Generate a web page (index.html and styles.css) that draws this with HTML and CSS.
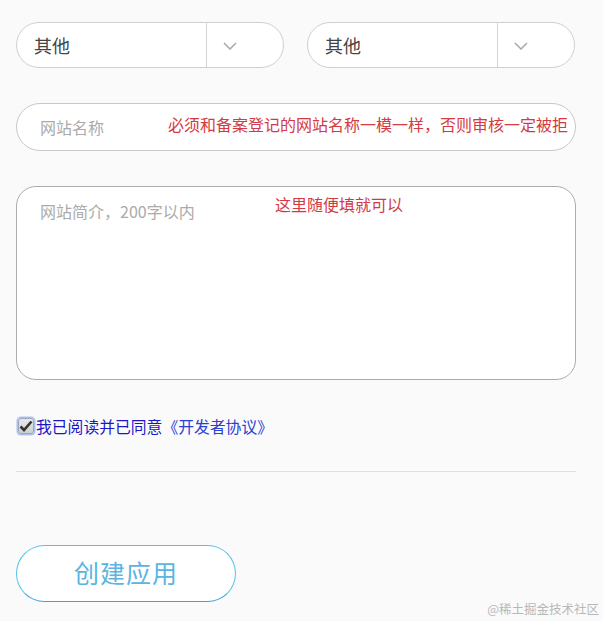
FILE: index.html
```html
<!DOCTYPE html>
<html lang="zh">
<head>
<meta charset="utf-8">
<link rel="stylesheet" href="styles.css">
</head>
<body>
<div class="page">
  <div class="selects">
    <div class="select">
      <span class="select-text">其他</span>
      <span class="select-arrow"><svg width="14" height="8" viewBox="0 0 14 8"><path d="M1 1 L7 7 L13 1" fill="none" stroke="#a8a8a8" stroke-width="1.5"/></svg></span>
    </div>
    <div class="select">
      <span class="select-text">其他</span>
      <span class="select-arrow"><svg width="14" height="8" viewBox="0 0 14 8"><path d="M1 1 L7 7 L13 1" fill="none" stroke="#a8a8a8" stroke-width="1.5"/></svg></span>
    </div>
  </div>
  <div class="input">
    <span class="placeholder">网站名称</span>
    <span class="note note-name">必须和备案登记的网站名称一模一样，否则审核一定被拒</span>
  </div>
  <div class="textarea">
    <span class="placeholder">网站简介，200字以内</span>
    <span class="note note-desc">这里随便填就可以</span>
  </div>
  <label class="agree">
    <span class="checkbox"><svg width="14" height="12" viewBox="0 0 14 12"><path d="M1.5 6.5 L5 10 L12.5 1.5" fill="none" stroke="#333" stroke-width="2.6"/></svg></span>
    <span class="agree-text">我已阅读并已同意<span class="link">《开发者协议》</span></span>
  </label>
  <div class="divider"></div>
  <div class="btn">创建应用</div>
</div>
<div class="watermark">@稀土掘金技术社区</div>
</body>
</html>
```
FILE: styles.css
```css
html, body {
  margin: 0;
  padding: 0;
  background: #fafafa;
  font-family: "Noto Sans CJK SC", "Noto Sans", sans-serif;
}
.page {
  width: 560px;
  padding: 22px 0 0 16px;
  display: flex;
  flex-direction: column;
}
.selects {
  display: flex;
  gap: 23px;
}
.select {
  width: 268px;
  height: 46px;
  box-sizing: border-box;
  border: 1px solid #cfcfcf;
  border-radius: 23px;
  background: #fff;
  display: flex;
  align-items: center;
}
.select-text {
  flex: 1;
  padding-left: 17px;
  font-size: 18px;
  color: #444;
  line-height: 44px;
  border-right: 1px solid #d4d4d4;
  margin-top: -1px;
}
.select-arrow {
  width: 46px;
  display: flex;
  justify-content: center;
  padding-right: 30px;
  padding-top: 1px;
}
.input {
  margin-top: 35px;
  height: 48px;
  box-sizing: border-box;
  border: 1px solid #c8c8c8;
  border-radius: 24px;
  background: #fff;
  display: flex;
  align-items: center;
  padding-left: 23px;
  position: relative;
}
.placeholder {
  font-size: 16px;
  color: #ababab;
}
.note {
  position: absolute;
  font-size: 16px;
  color: #d43a44;
  white-space: nowrap;
}
.note-name {
  left: 151px;
  top: 8px;
}
.textarea {
  margin-top: 35px;
  height: 194px;
  box-sizing: border-box;
  border: 1px solid #acacac;
  border-radius: 20px;
  background: #fff;
  padding: 12px 0 0 23px;
  position: relative;
}
.textarea .placeholder {
  line-height: 24px;
}
.note-desc {
  left: 258px;
  top: 5px;
}
.agree {
  margin-top: 36px;
  display: flex;
  align-items: center;
  height: 20px;
}
.checkbox {
  width: 16px;
  height: 16px;
  box-sizing: border-box;
  border: 1px solid #9aa5c8;
  border-radius: 3px;
  background: linear-gradient(#e8e8e8, #cfcfcf);
  box-shadow: 0 0 0 1.5px #a9c1f0;
  display: flex;
  align-items: center;
  justify-content: center;
  margin-left: 2px;
}
.agree-text {
  font-size: 15.8px;
  color: #1b17c9;
  margin-left: 2px;
}
.link {
  color: #2a40d2;
}
.divider {
  margin-top: 35px;
  height: 1px;
  background: #dedede;
}
.btn {
  margin-top: 73px;
  width: 220px;
  height: 57px;
  box-sizing: border-box;
  border: 1.5px solid #54c3ea;
  border-bottom-color: #3aa2e6;
  border-radius: 29px;
  background: #fff;
  display: flex;
  align-items: center;
  justify-content: center;
  font-size: 25px;
  color: #5ab5e2;
  letter-spacing: 1px;
  padding-bottom: 3px;
}
.watermark {
  position: absolute;
  right: 4px;
  top: 599px;
  font-size: 12.5px;
  color: #b8b8b8;
}
```
